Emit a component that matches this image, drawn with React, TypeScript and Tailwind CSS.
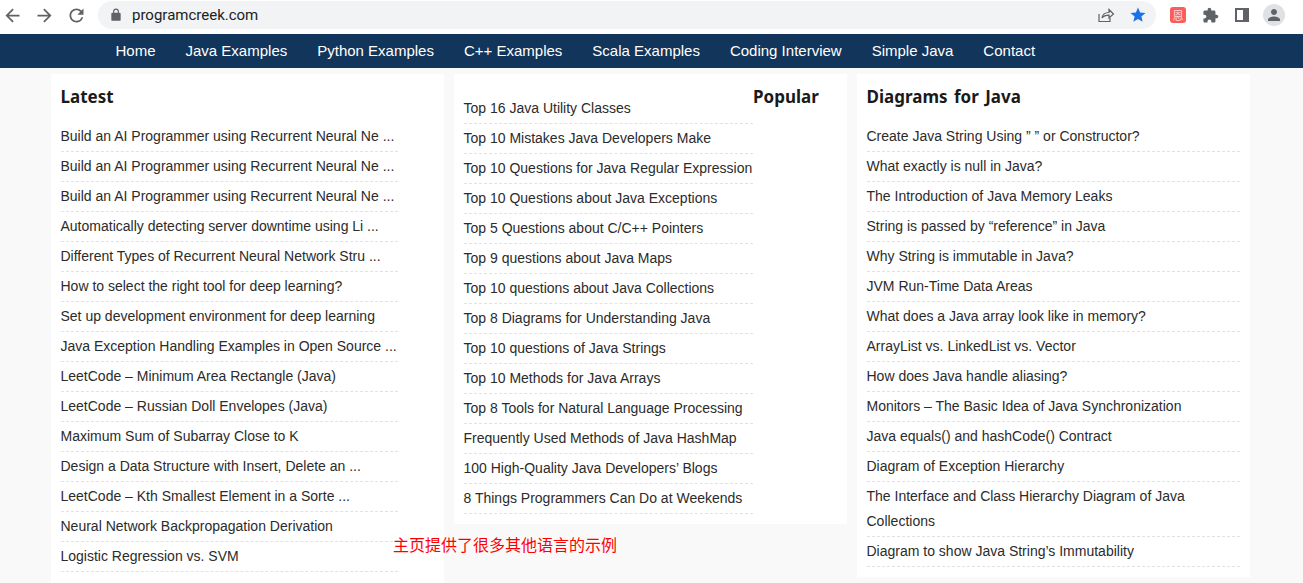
const latest = [
  "Build an AI Programmer using Recurrent Neural Ne ...",
  "Build an AI Programmer using Recurrent Neural Ne ...",
  "Build an AI Programmer using Recurrent Neural Ne ...",
  "Automatically detecting server downtime using Li ...",
  "Different Types of Recurrent Neural Network Stru ...",
  "How to select the right tool for deep learning?",
  "Set up development environment for deep learning",
  "Java Exception Handling Examples in Open Source ...",
  "LeetCode – Minimum Area Rectangle (Java)",
  "LeetCode – Russian Doll Envelopes (Java)",
  "Maximum Sum of Subarray Close to K",
  "Design a Data Structure with Insert, Delete an ...",
  "LeetCode – Kth Smallest Element in a Sorte ...",
  "Neural Network Backpropagation Derivation",
  "Logistic Regression vs. SVM",
];

const popular = [
  "Top 16 Java Utility Classes",
  "Top 10 Mistakes Java Developers Make",
  "Top 10 Questions for Java Regular Expression",
  "Top 10 Questions about Java Exceptions",
  "Top 5 Questions about C/C++ Pointers",
  "Top 9 questions about Java Maps",
  "Top 10 questions about Java Collections",
  "Top 8 Diagrams for Understanding Java",
  "Top 10 questions of Java Strings",
  "Top 10 Methods for Java Arrays",
  "Top 8 Tools for Natural Language Processing",
  "Frequently Used Methods of Java HashMap",
  "100 High-Quality Java Developers’ Blogs",
  "8 Things Programmers Can Do at Weekends",
];

const diagrams = [
  "Create Java String Using ” ” or Constructor?",
  "What exactly is null in Java?",
  "The Introduction of Java Memory Leaks",
  "String is passed by “reference” in Java",
  "Why String is immutable in Java?",
  "JVM Run-Time Data Areas",
  "What does a Java array look like in memory?",
  "ArrayList vs. LinkedList vs. Vector",
  "How does Java handle aliasing?",
  "Monitors – The Basic Idea of Java Synchronization",
  "Java equals() and hashCode() Contract",
  "Diagram of Exception Hierarchy",
  "The Interface and Class Hierarchy Diagram of Java Collections",
  "Diagram to show Java String’s Immutability",
];

const navItems = [
  "Home",
  "Java Examples",
  "Python Examples",
  "C++ Examples",
  "Scala Examples",
  "Coding Interview",
  "Simple Java",
  "Contact",
];

function LinkList({ items }: { items: string[] }) {
  return (
    <ul className="font-['Liberation_Sans',Arial,sans-serif] text-[14px] leading-[25px] text-[#2b2b2b]">
      {items.map((item, i) => (
        <li key={i} className="pt-[2px] pb-[2px] border-b border-dashed border-[#e2e2e2]">
          {item}
        </li>
      ))}
    </ul>
  );
}

function Heading({ children }: { children: string }) {
  return (
    <h2 className="font-['Noto_Sans',sans-serif] text-[17px] [word-spacing:2px] leading-[24px] font-bold text-[#1a1a1a]">
      {children}
    </h2>
  );
}

function BrowserBar() {
  return (
    <div className="h-[34px] bg-white flex items-center pb-[4px]">
      <div className="w-[98px] flex items-center pl-[2px] gap-[11px] text-[#5f6368]">
        <svg width="21" height="21" viewBox="0 0 24 24" fill="currentColor">
          <path d="M20 11H7.830l5.590-5.590L12 4l-8 8 8 8 1.410-1.410L7.830 13H20v-2z" />
        </svg>
        <svg width="21" height="21" viewBox="0 0 24 24" fill="currentColor">
          <path d="M4 11h12.170l-5.590-5.590L12 4l8 8-8 8-1.410-1.410L16.170 13H4v-2z" />
        </svg>
        <svg width="21" height="21" viewBox="0 0 24 24" fill="currentColor">
          <path d="M17.650 6.350A7.958 7.958 0 0012 4c-4.420 0-7.990 3.580-7.990 8s3.570 8 7.990 8c3.730 0 6.840-2.550 7.730-6h-2.080A5.990 5.990 0 0112 18c-3.310 0-6-2.690-6-6s2.690-6 6-6c1.660 0 3.140.69 4.220 1.780L13 11h7V4l-2.350 2.350z" />
        </svg>
      </div>
      <div className="w-[1058px] h-[28px] bg-[#f1f3f4] rounded-full flex items-center pl-[11px] pr-[9px]">
        <svg width="14" height="14" viewBox="0 0 24 24" fill="#5f6368">
          <path d="M18 8h-1V6A5 5 0 007 6v2H6a2 2 0 00-2 2v10a2 2 0 002 2h12a2 2 0 002-2V10a2 2 0 00-2-2zM9 6a3 3 0 016 0v2H9V6z" />
        </svg>
        <span className="ml-[9px] font-['Roboto',sans-serif] text-[15px] text-[#202124]">programcreek.com</span>
        <svg className="ml-auto" width="18" height="18" viewBox="0 0 18 18" fill="none" stroke="#5f6368" strokeWidth="1.2">
          <path d="M2 8v7.500h11V12" />
          <path d="M5 12c.5-3.500 3-5.500 7-5.500V3.500l4.500 4.500-4.500 4V9.200c-3 0-5.500.8-7 2.800z" />
        </svg>
        <svg className="ml-[14px]" width="18" height="18" viewBox="0 0 24 24" fill="#1a73e8">
          <path d="M12 17.270L18.180 21l-1.640-7.030L22 9.240l-7.190-.61L12 2 9.190 8.630 2 9.240l5.460 4.730L5.820 21z" />
        </svg>
      </div>
      <div className="flex items-center text-[#5f6368]">
        <div className="ml-[14px] w-[16px] h-[16px] rounded-[3px] bg-[#f95d5d] text-[#ffd9d9] text-[11px] leading-[16px] text-center font-['Noto_Sans_CJK_SC',sans-serif]">
          恩
        </div>
        <svg className="ml-[16px]" width="17" height="17" viewBox="0 0 24 24" fill="currentColor">
          <path d="M20.500 11H19V7c0-1.100-.9-2-2-2h-4V3.500C13 2.120 11.880 1 10.500 1S8 2.120 8 3.500V5H4c-1.100 0-1.990.9-1.990 2v3.800H3.500c1.490 0 2.700 1.210 2.700 2.700s-1.210 2.700-2.700 2.700H2V20c0 1.100.9 2 2 2h3.800v-1.500c0-1.490 1.210-2.700 2.700-2.700 1.490 0 2.700 1.210 2.700 2.700V22H17c1.100 0 2-.9 2-2v-4h1.500c1.380 0 2.500-1.120 2.500-2.500S21.880 11 20.500 11z" />
        </svg>
        <div className="ml-[16px] w-[14px] h-[14px] border-[2px] border-r-[6px] border-[#5f6368]" />
        <div className="ml-[14px] w-[22px] h-[22px] rounded-full bg-[#dfe1e5] flex items-center justify-center">
          <svg width="18" height="18" viewBox="0 0 24 24" fill="#5f6368">
            <path d="M12 12c2.210 0 4-1.790 4-4s-1.790-4-4-4-4 1.790-4 4 1.790 4 4 4zm0 2c-2.670 0-8 1.340-8 4v2h16v-2c0-2.660-5.330-4-8-4z" />
          </svg>
        </div>
      </div>
    </div>
  );
}

export default function App() {
  return (
    <div className="relative h-[583px] overflow-hidden bg-[#f9f9f9]">
      <BrowserBar />
      <nav className="h-[34px] bg-[#12355b] flex items-center gap-[30px] pl-[115.5px] font-['Liberation_Sans',Arial,sans-serif] text-[15px] text-white">
        {navItems.map((item) => (
          <span key={item}>{item}</span>
        ))}
      </nav>

      <div className="flex items-start gap-[10px] pl-[51px] pt-[6px]">
        <section className="w-[393px] h-[520px] bg-white pl-[9.5px] pr-[46.5px] pt-[11px]">
          <Heading>Latest</Heading>
          <div className="mt-[13px]">
            <LinkList items={latest} />
          </div>
        </section>

        <section className="w-[393px] bg-white pl-[9.5px] pt-[20px] pb-[10px] flex items-start">
          <div className="w-[289.5px]">
            <LinkList items={popular} />
          </div>
          <div className="-mt-[9px]">
            <Heading>Popular</Heading>
          </div>
        </section>

        <section className="w-[393px] bg-white pl-[9.5px] pr-[10px] pt-[11px] pb-[10px]">
          <Heading>Diagrams for Java</Heading>
          <div className="mt-[13px]">
            <LinkList items={diagrams} />
          </div>
        </section>
      </div>

      <div className="absolute left-[393px] top-[532px] font-['Noto_Sans_CJK_SC',sans-serif] text-[16px] leading-[24px] text-[#ff0000]">
        主页提供了很多其他语言的示例
      </div>
    </div>
  );
}
